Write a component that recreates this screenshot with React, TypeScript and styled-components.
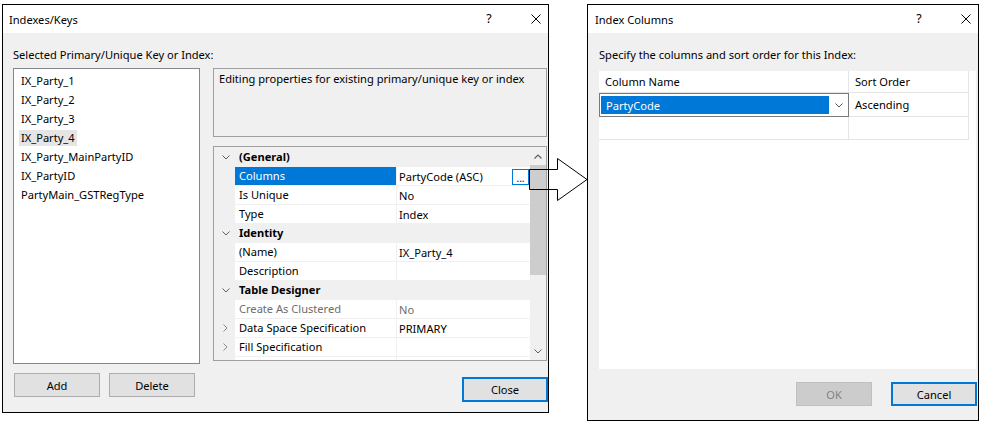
import React from "react";
import styled, { createGlobalStyle } from "styled-components";

const GlobalStyle = createGlobalStyle`
  html, body { margin: 0; padding: 0; background: #ffffff; }
  body {
    font-family: "Noto Sans", "Liberation Sans", sans-serif;
    font-size: 11.1px;
    color: #000;
  }
  * { box-sizing: border-box; }
`;

const Page = styled.div`
  position: relative;
  width: 985px;
  height: 422px;
  display: flex;
  align-items: flex-start;
  gap: 38px;
  padding: 4px 0 0 2px;
  overflow: hidden;
`;

const Dialog = styled.section<{ $w: number; $h: number }>`
  width: ${(p) => p.$w}px;
  height: ${(p) => p.$h}px;
  flex: none;
  border: 1px solid #000;
  background: #f0f0f0;
  display: flex;
  flex-direction: column;
`;

const TitleBar = styled.header<{ $padLeft: number }>`
  height: 28px;
  flex: none;
  background: #fff;
  display: flex;
  align-items: center;
  padding-left: ${(p) => p.$padLeft}px;
  padding-right: 7px;
`;

const TitleText = styled.span`
  flex: 1;
  white-space: nowrap;
`;

const HelpGlyph = styled.span`
  width: 8px;
  text-align: center;
  font-size: 12.5px;
  line-height: 1;
  margin-right: 38px;
`;

const CloseGlyph = () => (
  <svg width="10" height="10" viewBox="0 0 10 10">
    <path d="M0.5 0.5 L9.5 9.5 M9.5 0.5 L0.5 9.5" stroke="#000" strokeWidth="1" fill="none" />
  </svg>
);

const Body = styled.div<{ $pad: string }>`
  flex: 1;
  min-height: 0;
  display: flex;
  flex-direction: column;
  padding: ${(p) => p.$pad};
`;

const Label = styled.div`
  height: 16px;
  line-height: 16px;
  white-space: nowrap;
`;

const MainRow = styled.div`
  display: flex;
  gap: 13px;
  margin-top: 5px;
`;

const LeftCol = styled.div`
  width: 187px;
  display: flex;
  flex-direction: column;
`;

const RightCol = styled.div`
  width: 335px;
  display: flex;
  flex-direction: column;
`;

const ListBox = styled.div`
  height: 296px;
  border: 1px solid #828790;
  background: #fff;
  padding: 2px 0 0 5px;
`;

const ListItem = styled.div`
  height: 19px;
  display: flex;
  align-items: center;
`;

const ItemText = styled.span<{ $selected?: boolean }>`
  height: 16px;
  line-height: 16px;
  padding: 0 2px;
  white-space: nowrap;
  background: ${(p) => (p.$selected ? "#e5e5e5" : "transparent")};
`;

const ButtonRow = styled.div<{ $justify?: string; $gap: number; $top: number }>`
  display: flex;
  justify-content: ${(p) => p.$justify || "flex-start"};
  gap: ${(p) => p.$gap}px;
  margin-top: ${(p) => p.$top}px;
  padding-left: 1px;
`;

type Variant = "normal" | "default" | "disabled";

const Button = styled.button<{ $w: number; $h: number; $variant?: Variant }>`
  width: ${(p) => p.$w}px;
  height: ${(p) => p.$h}px;
  padding: 0;
  font-family: inherit;
  font-size: 11.1px;
  border-radius: 0;
  background: ${(p) => (p.$variant === "disabled" ? "#cccccc" : "#e1e1e1")};
  color: ${(p) => (p.$variant === "disabled" ? "#838383" : "#000")};
  border: ${(p) =>
    p.$variant === "default"
      ? "2px solid #0078d7"
      : p.$variant === "disabled"
      ? "1px solid #bfbfbf"
      : "1px solid #adadad"};
`;

const DescBox = styled.div`
  width: 334px;
  height: 69px;
  border: 1px solid #a0a0a0;
  padding: 2px 5px;
  line-height: 16px;
  white-space: nowrap;
`;

const PropGrid = styled.div`
  width: 334px;
  height: 215px;
  margin-top: 9px;
  border: 1px solid #a0a0a0;
  background: #fff;
  display: flex;
`;

const PropRows = styled.div`
  flex: 1;
  overflow: hidden;
`;

const PropRow = styled.div<{ $category?: boolean }>`
  display: grid;
  grid-template-columns: 21px 161px 1fr;
  height: 19px;
  border-top: 1px solid #f0f0f0;
  background: ${(p) => (p.$category ? "#f0f0f0" : "#fff")};
`;

const Gutter = styled.div`
  background: #f0f0f0;
  display: flex;
  align-items: center;
  justify-content: center;
  padding-left: 2px;
`;

const NameCell = styled.div<{ $selected?: boolean; $disabled?: boolean; $category?: boolean }>`
  grid-column: ${(p) => (p.$category ? "span 2" : "auto")};
  padding-left: 4px;
  line-height: 18px;
  white-space: nowrap;
  overflow: hidden;
  font-weight: ${(p) => (p.$category ? 700 : 400)};
  background: ${(p) => (p.$selected ? "#0078d7" : "transparent")};
  color: ${(p) => (p.$selected ? "#fff" : p.$disabled ? "#6d6d6d" : "#000")};
`;

const ValueCell = styled.div<{ $disabled?: boolean }>`
  border-left: 1px solid #f0f0f0;
  padding: 0 1px 0 2px;
  display: flex;
  align-items: center;
  justify-content: space-between;
  white-space: nowrap;
  color: ${(p) => (p.$disabled ? "#6d6d6d" : "#000")};
`;

const EllipsisButton = styled.span`
  width: 17px;
  height: 16px;
  border: 1px solid #0078d7;
  background: #fff;
  font-size: 10px;
  line-height: 16px;
  text-align: center;
  margin-top: 2px;
`;

const ScrollBar = styled.div`
  width: 16px;
  background: #f0f0f0;
  display: flex;
  flex-direction: column;
`;

const ScrollArrow = styled.div`
  height: 18px;
  display: flex;
  align-items: center;
  justify-content: center;
`;

const ScrollThumb = styled.div`
  height: 110px;
  background: #cdcdcd;
`;

const ScrollSpacer = styled.div`
  flex: 1;
`;

const ColGrid = styled.div`
  width: 377px;
  height: 298px;
  margin-top: 8px;
  background: #fff;
`;

const GridRow = styled.div<{ $h: number }>`
  display: flex;
  height: ${(p) => p.$h}px;
`;

const GridCell = styled.div<{ $w: number }>`
  width: ${(p) => p.$w}px;
  flex: none;
  border-right: 1px solid #e5e5e5;
  border-bottom: 1px solid #e5e5e5;
  padding-left: 6px;
  display: flex;
  align-items: center;
  white-space: nowrap;
`;

const Combo = styled.div`
  width: 250px;
  flex: none;
  border: 1px solid #7a7a7a;
  display: flex;
  padding: 2px 0 2px 1px;
`;

const ComboValue = styled.div`
  flex: 1;
  background: #0078d7;
  color: #fff;
  padding-left: 5px;
  display: flex;
  align-items: center;
`;

const ComboChevron = styled.div`
  width: 19px;
  display: flex;
  align-items: center;
  justify-content: center;
`;

const ArrowOverlay = styled.svg`
  position: absolute;
  left: 528px;
  top: 157px;
`;

const ChevronDown = ({ color = "#606060" }: { color?: string }) => (
  <svg width="8" height="5" viewBox="0 0 8 5">
    <path d="M0.5 0.5 L4 4 L7.5 0.5" stroke={color} strokeWidth="1" fill="none" />
  </svg>
);

const ChevronRight = () => (
  <svg width="5" height="8" viewBox="0 0 5 8">
    <path d="M0.5 0.5 L4 4 L0.5 7.5" stroke="#8a8a8a" strokeWidth="1" fill="none" />
  </svg>
);

const ChevronUp = () => (
  <svg width="8" height="5" viewBox="0 0 8 5">
    <path d="M0.5 4.5 L4 1 L7.5 4.5" stroke="#606060" strokeWidth="1.2" fill="none" />
  </svg>
);

type Prop = {
  name: string;
  value?: string;
  category?: boolean;
  selected?: boolean;
  disabled?: boolean;
  expand?: boolean;
  ellipsis?: boolean;
};

const props: Prop[] = [
  { name: "(General)", category: true },
  { name: "Columns", value: "PartyCode (ASC)", selected: true, ellipsis: true },
  { name: "Is Unique", value: "No" },
  { name: "Type", value: "Index" },
  { name: "Identity", category: true },
  { name: "(Name)", value: "IX_Party_4" },
  { name: "Description", value: "" },
  { name: "Table Designer", category: true },
  { name: "Create As Clustered", value: "No", disabled: true },
  { name: "Data Space Specification", value: "PRIMARY", expand: true },
  { name: "Fill Specification", value: "", expand: true },
  { name: "", value: "" },
];

const indexes = [
  "IX_Party_1",
  "IX_Party_2",
  "IX_Party_3",
  "IX_Party_4",
  "IX_Party_MainPartyID",
  "IX_PartyID",
  "PartyMain_GSTRegType",
];

export default function App() {
  return (
    <>
      <GlobalStyle />
      <Page>
        <Dialog $w={547} $h={409}>
          <TitleBar $padLeft={6}>
            <TitleText>Indexes/Keys</TitleText>
            <HelpGlyph>?</HelpGlyph>
            <CloseGlyph />
          </TitleBar>
          <Body $pad="14px 0 0 10px">
            <Label>Selected Primary/Unique Key or Index:</Label>
            <MainRow>
              <LeftCol>
                <ListBox>
                  {indexes.map((n) => (
                    <ListItem key={n}>
                      <ItemText $selected={n === "IX_Party_4"}>{n}</ItemText>
                    </ListItem>
                  ))}
                </ListBox>
                <ButtonRow $gap={9} $top={9}>
                  <Button $w={86} $h={24}>Add</Button>
                  <Button $w={86} $h={24}>Delete</Button>
                </ButtonRow>
              </LeftCol>
              <RightCol>
                <DescBox>Editing properties for existing primary/unique key or index</DescBox>
                <PropGrid>
                  <PropRows>
                    {props.map((p, i) => (
                      <PropRow key={i} $category={p.category}>
                        <Gutter>
                          {p.category ? <ChevronDown /> : p.expand ? <ChevronRight /> : null}
                        </Gutter>
                        <NameCell $category={p.category} $selected={p.selected} $disabled={p.disabled}>
                          {p.name}
                        </NameCell>
                        {!p.category && (
                          <ValueCell $disabled={p.disabled}>
                            <span>{p.value}</span>
                            {p.ellipsis && <EllipsisButton>...</EllipsisButton>}
                          </ValueCell>
                        )}
                      </PropRow>
                    ))}
                  </PropRows>
                  <ScrollBar>
                    <ScrollArrow>
                      <ChevronUp />
                    </ScrollArrow>
                    <ScrollThumb />
                    <ScrollSpacer />
                    <ScrollArrow>
                      <ChevronDown />
                    </ScrollArrow>
                  </ScrollBar>
                </PropGrid>
                <ButtonRow $justify="flex-end" $gap={0} $top={16}>
                  <Button $w={86} $h={25} $variant="default">Close</Button>
                </ButtonRow>
              </RightCol>
            </MainRow>
          </Body>
        </Dialog>

        <Dialog $w={392} $h={417}>
          <TitleBar $padLeft={7}>
            <TitleText>Index Columns</TitleText>
            <HelpGlyph>?</HelpGlyph>
            <CloseGlyph />
          </TitleBar>
          <Body $pad="14px 1px 0 11px">
            <Label>Specify the columns and sort order for this Index:</Label>
            <ColGrid>
              <GridRow $h={22}>
                <GridCell $w={250}>Column Name</GridCell>
                <GridCell $w={120}>Sort Order</GridCell>
              </GridRow>
              <GridRow $h={24}>
                <Combo>
                  <ComboValue>PartyCode</ComboValue>
                  <ComboChevron>
                    <ChevronDown color="#505050" />
                  </ComboChevron>
                </Combo>
                <GridCell $w={120}>Ascending</GridCell>
              </GridRow>
              <GridRow $h={23}>
                <GridCell $w={250} />
                <GridCell $w={120} />
              </GridRow>
            </ColGrid>
            <ButtonRow $justify="flex-end" $gap={19} $top={13}>
              <Button $w={76} $h={24} $variant="disabled">OK</Button>
              <Button $w={86} $h={24} $variant="default">Cancel</Button>
            </ButtonRow>
          </Body>
        </Dialog>

        <ArrowOverlay width="61" height="46" viewBox="528 157 61 46">
          <polygon
            points="529.5,169.5 557.5,169.5 557.5,158.5 587,179.5 557.5,200.5 557.5,189.5 529.5,189.5"
            fill="none"
            stroke="#000"
            strokeWidth="1"
          />
        </ArrowOverlay>
      </Page>
    </>
  );
}
